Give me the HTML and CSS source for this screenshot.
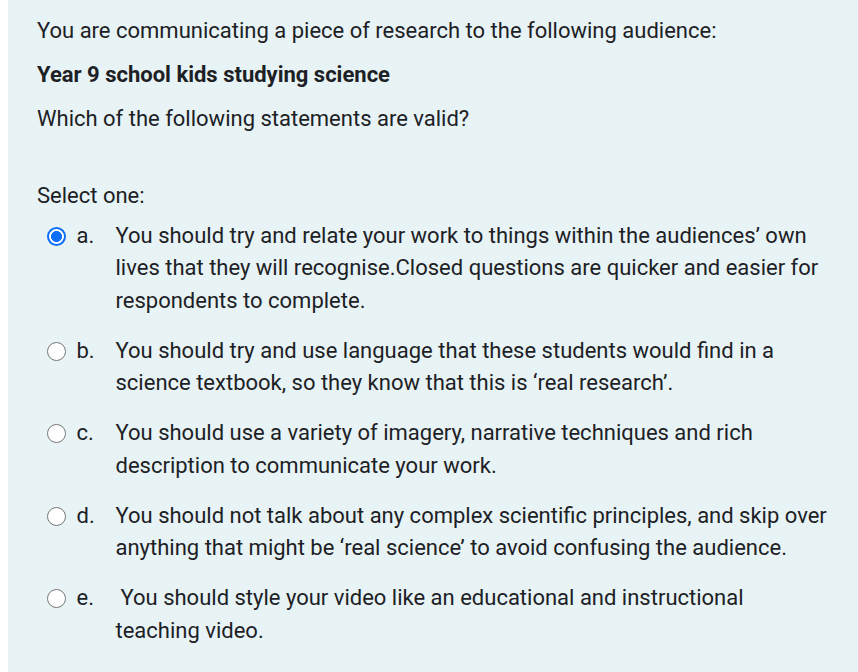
FILE: index.html
```html
<!DOCTYPE html>
<html lang="en">
<head>
<meta charset="utf-8">
<title>Question</title>
<link rel="stylesheet" href="styles.css">
</head>
<body>
<div class="panel">
  <div class="qtext">
    <p>You are communicating a piece of research to the following audience:</p>
    <p><strong>Year 9 school kids studying science</strong></p>
    <p>Which of the following statements are valid?</p>
  </div>
  <div class="ablock">
    <p class="prompt">Select one:</p>
    <div class="answers">
      <div class="answer">
        <span class="radio checked"></span>
        <span class="letter">a.</span>
        <span class="atext">You should try and relate your work to things within the audiences’ own lives that they will recognise.Closed questions are quicker and easier for respondents to complete.</span>
      </div>
      <div class="answer">
        <span class="radio"></span>
        <span class="letter">b.</span>
        <span class="atext">You should try and use language that these students would find in a science textbook, so they know that this is ‘real research’.</span>
      </div>
      <div class="answer">
        <span class="radio"></span>
        <span class="letter">c.</span>
        <span class="atext">You should use a variety of imagery, narrative techniques and rich description to communicate your work.</span>
      </div>
      <div class="answer">
        <span class="radio"></span>
        <span class="letter">d.</span>
        <span class="atext">You should not talk about any complex scientific principles, and skip over anything that might be ‘real science’ to avoid confusing the audience.</span>
      </div>
      <div class="answer">
        <span class="radio"></span>
        <span class="letter">e.</span>
        <span class="atext lead">You should style your video like an educational and instructional teaching video.</span>
      </div>
    </div>
  </div>
</div>
</body>
</html>
```

FILE: styles.css
```css
html, body {
  margin: 0;
  padding: 0;
  background: #ffffff;
}
body {
  padding-left: 8px;
  font-family: Roboto, "Liberation Sans", sans-serif;
  font-size: 22px;
  line-height: 32.5px;
  color: #1d2125;
}
.panel {
  background: #e7f3f5;
  min-height: 672px;
  box-sizing: border-box;
  padding: 15px 29px 0 29px;
}
.qtext p {
  margin: 0 0 11.5px 0;
}
.qtext strong {
  font-weight: 700;
}
.ablock {
  margin-top: 44px;
}
.prompt {
  margin: 0 0 7.5px 0;
}
.answers {
  display: flex;
  flex-direction: column;
  gap: 17.5px;
}
.answer {
  display: flex;
  align-items: flex-start;
}
.radio {
  flex: none;
  width: 19px;
  height: 19px;
  box-sizing: border-box;
  border-radius: 50%;
  border: 1.5px solid #767676;
  background: #ffffff;
  margin: 7px 0 0 9.5px;
}
.radio.checked {
  border: 2px solid #0f6ef6;
  background: radial-gradient(circle, #0f6ef6 0 5.2px, #ffffff 5.8px);
}
.letter {
  flex: none;
  width: 39px;
  margin-left: 11px;
}
.atext {
  flex: 1;
}
.atext.lead {
  text-indent: 5px;
}
```
